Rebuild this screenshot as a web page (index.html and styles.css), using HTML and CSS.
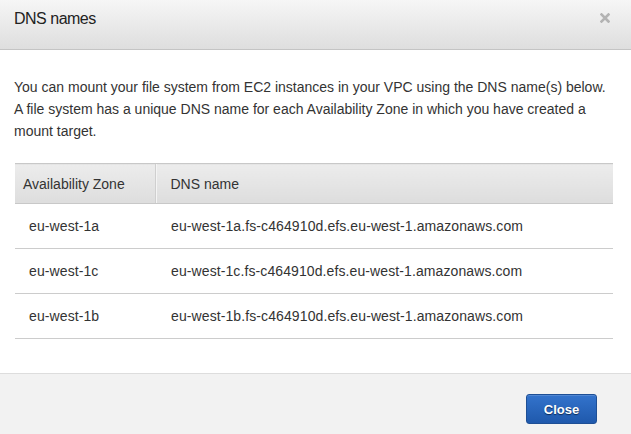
FILE: index.html
```html
<!DOCTYPE html>
<html>
<head>
<meta charset="utf-8">
<link rel="stylesheet" href="styles.css">
</head>
<body>
<div class="modal">
  <div class="modal-header">
    <h2 class="modal-title">DNS names</h2>
    <span class="modal-close" aria-label="Close">
      <svg width="10" height="10" viewBox="0 0 10 10"><path d="M1.5 1.5 L8.5 8.5 M8.5 1.5 L1.5 8.5" stroke="#b3b3b3" stroke-width="2.6" stroke-linecap="square"/></svg>
    </span>
  </div>
  <div class="modal-body">
    <p class="intro">You can mount your file system from EC2 instances in your VPC using the DNS name(s) below.<br>A file system has a unique DNS name for each Availability Zone in which you have created a mount target.</p>
    <table class="dns-table">
      <thead>
        <tr><th class="col-az">Availability Zone</th><th>DNS name</th></tr>
      </thead>
      <tbody>
        <tr><td>eu-west-1a</td><td>eu-west-1a.fs-c464910d.efs.eu-west-1.amazonaws.com</td></tr>
        <tr><td>eu-west-1c</td><td>eu-west-1c.fs-c464910d.efs.eu-west-1.amazonaws.com</td></tr>
        <tr><td>eu-west-1b</td><td>eu-west-1b.fs-c464910d.efs.eu-west-1.amazonaws.com</td></tr>
      </tbody>
    </table>
  </div>
  <div class="modal-footer">
    <button class="btn-primary">Close</button>
  </div>
</div>
</body>
</html>
```
FILE: styles.css
```css
html, body {
  margin: 0;
  padding: 0;
  background: #ffffff;
}
body {
  font-family: "Liberation Sans", Arial, sans-serif;
  color: #333333;
  width: 631px;
  height: 434px;
  overflow: hidden;
}
.modal {
  display: flex;
  flex-direction: column;
  height: 434px;
}
.modal-header {
  height: 50px;
  box-sizing: border-box;
  border-bottom: 1px solid #c4c4c4;
  background: linear-gradient(to bottom, #f6f6f6 0%, #dedede 100%);
  display: flex;
  align-items: flex-start;
  justify-content: space-between;
  padding: 0 21px 0 14px;
  flex: none;
}
.modal-title {
  margin: 0;
  font-weight: normal;
  font-size: 16px;
  line-height: 20px;
  padding-top: 9px;
  color: #222222;
  letter-spacing: -0.5px;
}
.modal-close {
  display: block;
  padding-top: 13px;
  line-height: 0;
}
.modal-body {
  padding: 26px 18px 34px 15px;
  flex: none;
}
.intro {
  margin: 0 0 21px -1px;
  font-size: 14px;
  line-height: 22px;
  color: #333333;
}
.dns-table {
  width: 598px;
  border-collapse: collapse;
  font-size: 14px;
  color: #333333;
}
.dns-table th {
  text-align: left;
  font-weight: normal;
  height: 40px;
  box-sizing: border-box;
  padding: 0 8px 0 8px;
  background: linear-gradient(to bottom, #ececec 0%, #dddddd 100%);
  border-top: 1px solid #c8c8c8;
  border-bottom: 1px solid #c8c8c8;
  border-left: 1px solid #cfcfcf;
  box-shadow: inset 1px 0 0 #f4f4f4;
}
.dns-table th:first-child {
  border-left: none;
  box-shadow: none;
}
.dns-table th.col-az {
  width: 140px;
  box-sizing: border-box;
}
.dns-table th + th {
  padding-left: 15px;
}
.dns-table td {
  height: 45px;
  box-sizing: border-box;
  padding: 0 8px 0 14px;
  border-bottom: 1px solid #cccccc;
  letter-spacing: 0.1px;
}
.dns-table td + td {
  padding-left: 16px;
}
.modal-footer {
  flex: 1;
  background: #f2f2f2;
  border-top: 1px solid #dddddd;
  display: flex;
  justify-content: flex-end;
  align-items: flex-start;
  padding: 20px 34px 0 0;
}
.btn-primary {
  width: 71px;
  height: 30px;
  border: 1px solid #1e4f95;
  border-radius: 3px;
  background: linear-gradient(to bottom, #3373cc 0%, #1f59ac 100%);
  color: #ffffff;
  font-family: "Liberation Sans", Arial, sans-serif;
  font-weight: bold;
  font-size: 13px;
  text-shadow: 0 1px 1px #0c2a55;
  padding: 0;
  box-shadow: inset 0 1px 0 rgba(255,255,255,0.15);
}
```
